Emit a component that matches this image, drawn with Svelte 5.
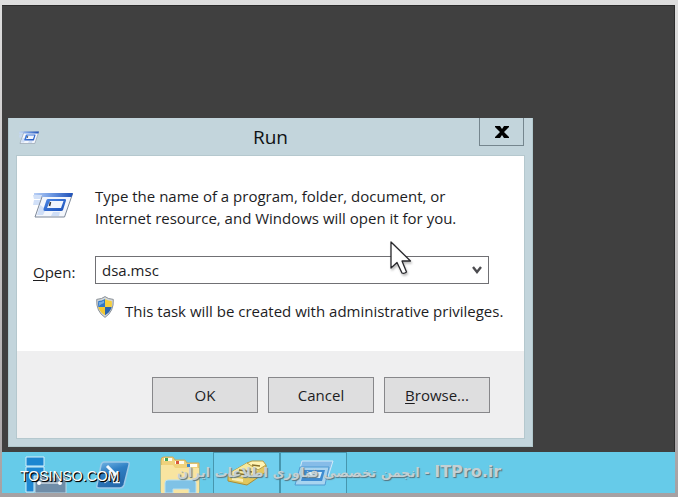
<script>
  let command = $state('dsa.msc');
</script>

{#snippet runIcon(size)}
  <svg class="run-icon" width={size} height={size * 0.75} viewBox="0 0 40 30" aria-hidden="true">
    <defs>
      <linearGradient id="run-top-{size}" x1="0" x2="1">
        <stop offset="0" stop-color="#b9cff5" />
        <stop offset="0.45" stop-color="#6d98e2" />
        <stop offset="1" stop-color="#1e50b8" />
      </linearGradient>
      <linearGradient id="run-pane-{size}" x1="0" x2="1" y2="1">
        <stop offset="0" stop-color="#4b87e6" />
        <stop offset="1" stop-color="#1a4fb8" />
      </linearGradient>
    </defs>
    <path d="M0 5H11L9 9H1ZM1 10H8L6 15H0Z" fill="#c6d8f6" opacity="0.8" />
    <path d="M10 4H39.500L31.500 27H2Z" fill="#f3f6fc" stroke="#7d8899" />
    <path d="M7 15L4 25H10L13 19ZM20 22H27L26 26H18Z" fill="#cfdef6" />
    <path d="M1 3H40L38.500 7H9V5H1Z" fill="url(#run-top-{size})" />
    <path d="M15 9H32Q33.500 9 33 10.500L30 20Q29.500 21 28 21H12Q10 21 10.500 19L13.500 10Q14 9 15 9Z" fill="url(#run-pane-{size})" />
    <path d="M17 11H30.500L28 18H14Z" fill="#f1f5fd" />
    <path d="M17.500 12L16.500 16" stroke="#333" stroke-width="1.5" />
  </svg>
{/snippet}

<main class="frame">
  <section class="desktop">
    <form class="dialog" aria-labelledby="title" onsubmit={(e) => e.preventDefault()}>
      <header class="titlebar">
        {@render runIcon(20)}
        <h1 id="title">Run</h1>
        <button type="button" class="close" aria-label="Close">
          <svg width="14" height="12" viewBox="0 0 14 12">
            <path d="M0 0H5L7 3L9 0H14V1L9 6L14 11V12H9L7 9L5 12H0V11L5 6L0 1Z" fill="#000" />
          </svg>
        </button>
      </header>
      <div class="client">
        <div class="content">
          {@render runIcon(40)}
          <p class="intro">
            Type the name of a program, folder, document, or<br />
            Internet resource, and Windows will open it for you.
          </p>
          <label for="command"><u>O</u>pen:</label>
          <div class="combo">
            <input id="command" type="text" bind:value={command} />
            <button type="button" aria-label="Show history">
              <svg width="10" height="8" viewBox="0 0 10 8">
                <path d="M1 1L5 6L9 1" fill="none" stroke="#4c4c50" stroke-width="2.4" />
              </svg>
            </button>
          </div>
          <p class="note">
            <svg width="20" height="22" viewBox="0 0 18 22" aria-hidden="true">
              <path d="M9 0.6Q12 3 17.3 3.4Q18 15.500 9 21.400Q0 15.500 0.700 3.400Q6 3 9 0.600Z" fill="#d5d9dc" stroke="#8a9198" />
              <path d="M9 3V11H2.300Q1.800 8 2.300 5Q6 5 9 3Z" fill="#2f77c6" />
              <path d="M9 3V11H15.700Q16.200 8 15.700 5Q12 5 9 3Z" fill="#f5cf3e" />
              <path d="M9 11V19.300Q3.500 16 2.300 11Z" fill="#f2c832" />
              <path d="M9 11V19.300Q14.500 16 15.700 11Z" fill="#2a64ad" />
              <path d="M3 6Q6 6 8 4.500V7Q5 8 3 10Z" fill="#8fc0ee" opacity="0.7" />
            </svg>
            <span>This task will be created with administrative privileges.</span>
          </p>
        </div>
        <footer class="actions">
          <button type="submit">OK</button>
          <button type="button">Cancel</button>
          <button type="button"><span><u>B</u>rowse...</span></button>
        </footer>
      </div>
    </form>
    <svg class="pointer" width="22" height="34" viewBox="0 0 22 34" aria-hidden="true">
      <path d="M1 1V27L7 21.500L12 32Q14 33 16.500 31L12 20H20.500Z" fill="#fff" stroke="#28282c" stroke-width="1.300" stroke-linejoin="round" />
    </svg>
  </section>

  <nav class="taskbar" aria-label="Taskbar">
    <button type="button" class="task" aria-label="Server Manager">
      <svg width="42" height="37" viewBox="0 0 42 37">
        <path d="M1 1H19V10H1Z" fill="#1c86d1" stroke="#d5effa" />
        <path d="M1 11H19V20H9V36H1Z" fill="#1c86d1" stroke="#d5effa" />
        <path d="M10 21H41V37H10Z" fill="#6f8da8" stroke="#b9d7e6" />
        <path d="M14 27H35" stroke="#fff" />
        <circle cx="14" cy="27" r="2" fill="#fff" /><circle cx="35" cy="27" r="2" fill="#fff" />
      </svg>
    </button>
    <button type="button" class="task" aria-label="PowerShell">
      <svg width="36" height="30" viewBox="0 0 36 30">
        <defs>
          <linearGradient id="shell" x2="0.4" y2="1">
            <stop offset="0" stop-color="#78b8e6" />
            <stop offset="0.45" stop-color="#2e7fc4" />
            <stop offset="1" stop-color="#2468aa" />
          </linearGradient>
        </defs>
        <path d="M9 2H32Q35 2 34 5L29 25Q28 28 25 28H4Q1 28 2 25L6 5Q7 2 9 2Z" fill="url(#shell)" stroke="#9cc9e8" stroke-width="1.5" />
        <path d="M12 6L20 14L9 22" fill="none" stroke="#f3f9fe" stroke-width="3" />
        <path d="M18 22H25" stroke="#f3f9fe" stroke-width="2.500" />
      </svg>
    </button>
    <button type="button" class="task" aria-label="File Explorer">
      <svg width="42" height="38" viewBox="0 0 42 38">
        <path d="M2 4Q2 1 5 1H14L16 4H26L28 7H40V36H2Z" fill="#f0d27c" stroke="#cfad5a" />
        <path d="M5 2H13V5H5ZM16 5H25V8H16ZM28 8H38V11H28Z" fill="#fffdf2" />
        <path d="M6 2H9V5H6Z" fill="#3da45a" /><path d="M17 5H20V8H17Z" fill="#d9583b" /><path d="M28 8H31V11H28Z" fill="#3a86cc" />
        <path d="M2 9H14L16 12H40V37H2Z" fill="#f8e4a0" />
        <path d="M6 37V27Q6 24 9 24H34Q37 24 37 27V37H30V33H14V37Z" fill="#7fc2e6" stroke="#b7e0f3" />
      </svg>
    </button>
    <button type="button" class="task open" aria-label="Active Directory tools">
      <svg width="40" height="26" viewBox="0 0 40 26">
        <path d="M1 14L20 3L39 5V12L20 25L1 21Z" fill="#e2c75e" stroke="#a98d37" />
        <path d="M1 14L20 3L39 5L20 18Z" fill="#f7e99d" />
        <path d="M20 3L25 1H36L39 5L31 10Z" fill="#fff4b4" stroke="#b79e48" />
        <path d="M25 5L33 6M12 10L25 12M7 13L20 15" stroke="#866f2b" stroke-width="1.500" />
        <path d="M5 17L16 19V22L5 20Z" fill="#f7edb5" />
      </svg>
    </button>
    <button type="button" class="task open" aria-label="Run">
      <svg width="40" height="27" viewBox="0 0 40 27">
        <path d="M8 1H39L33 20H3Z" fill="#86bce8" stroke="#d2eafa" />
        <path d="M6 7H35L31 25H1Z" fill="#a8d4f0" stroke="#4f9bd2" />
        <path d="M10 10H31L28 21H7Z" fill="#3f8cd0" />
        <path d="M14 12H28L26 18H12Z" fill="#d9effb" />
      </svg>
    </button>
    <span class="site">TOSINSO.COM</span>
    <span class="forum" dir="rtl" lang="fa"><bdi>ITPro.ir</bdi> - انجمن تخصصی فناوری اطلاعات ایران</span>
  </nav>
</main>

<style>
  :global(body) {
    margin: 0;
  }
  .frame {
    box-sizing: border-box;
    min-height: 100vh;
    display: flex;
    flex-direction: column;
    padding: 5px 3px 4px 2px;
    background: linear-gradient(#dedede, #c4c2c3 50%, #a5a1a3);
    font-family: "Open Sans", "Noto Sans", sans-serif;
    font-size: 15px;
    line-height: 22px;
    color: #1d1d1f;
  }
  .desktop {
    position: relative;
    flex: 1;
    box-sizing: border-box;
    padding: 112px 6px 4px;
    background: #404040;
    border-top: 1px solid #2c2c2c;
    border-right: 1px solid #2c2c2c;
  }
  .pointer {
    position: absolute;
    left: 388px;
    top: 235px;
    filter: drop-shadow(1px 2px 1px #0004);
  }
  .dialog {
    box-sizing: border-box;
    max-width: 525px;
    padding: 0 8px 8px;
    background: #c3d5dc;
    border: 1px solid #b1c8cd;
    border-top: 0;
  }
  .titlebar {
    display: grid;
    grid-template-columns: 45px 1fr 45px;
    height: 38px;
    align-items: center;
  }
  .titlebar .run-icon {
    margin-left: 2px;
  }
  h1 {
    margin: 0;
    text-align: center;
    font-size: 19px;
    font-weight: 400;
    color: #101214;
  }
  button {
    padding: 0;
    font: inherit;
    color: inherit;
    border: 0;
    background: none;
  }
  .close {
    display: flex;
    align-items: center;
    justify-content: center;
    align-self: start;
    height: 28px;
    border: 1px solid #75868e;
    border-top: 0;
  }
  .client {
    background: #fff;
    box-shadow: 0 0 0 1px #b5c8ce;
  }
  .content {
    display: grid;
    grid-template-columns: 62px minmax(0, 1fr);
    padding: 29px 35px 29px 16px;
  }
  .content > .run-icon {
    margin-top: 5px;
  }
  p {
    margin: 0;
    white-space: nowrap;
  }
  label {
    margin-top: 32px;
  }
  u {
    text-decoration-thickness: 1px;
    text-underline-offset: 2px;
  }
  .combo {
    display: flex;
    margin-top: 27px;
    height: 28px;
    box-sizing: border-box;
    border: 1px solid #707074;
  }
  .combo input {
    flex: 1;
    min-width: 0;
    padding: 0 6px;
    border: 0;
    outline: 0;
    font: inherit;
    color: inherit;
    background: none;
  }
  .combo button {
    display: flex;
    align-items: center;
    justify-content: center;
    width: 22px;
  }
  .note {
    grid-column: 2;
    display: flex;
    gap: 10px;
    margin-top: 12px;
  }
  .note svg {
    flex: none;
  }
  .note span {
    margin-top: 4px;
  }
  .actions {
    display: flex;
    justify-content: flex-end;
    gap: 10px;
    padding: 26px 34px 25px;
    background: #efeff0;
  }
  .actions button {
    width: 106px;
    height: 36px;
    background: #dededf;
    border: 1px solid #87878a;
  }
  .taskbar {
    position: relative;
    display: flex;
    height: 41px;
    box-sizing: border-box;
    padding-left: 10px;
    background: #66cbe9;
    overflow: hidden;
  }
  .task {
    display: flex;
    align-items: center;
    justify-content: center;
    width: 67px;
    height: 41px;
    box-sizing: border-box;
    padding-top: 4px;
  }
  .task.open {
    padding-top: 0;
    background: #70cfee;
    border: 1px solid #4796ae;
    border-bottom: 0;
  }
  .site,
  .forum {
    position: absolute;
    white-space: nowrap;
  }
  .site {
    left: 18px;
    top: 13px;
    font-family: "Liberation Sans", sans-serif;
    font-size: 14px;
    color: #fff;
    text-shadow: 1px 1px 1px #000, 1px 1px 0 #111;
  }
  .forum {
    left: 175px;
    top: 9px;
    font-family: "DejaVu Sans", sans-serif;
    font-size: 13px;
    font-weight: 700;
    color: #c4d0d4;
    text-shadow: 1px 1px 1px #56727c;
  }
  .forum bdi {
    font-size: 16px;
  }
</style>
